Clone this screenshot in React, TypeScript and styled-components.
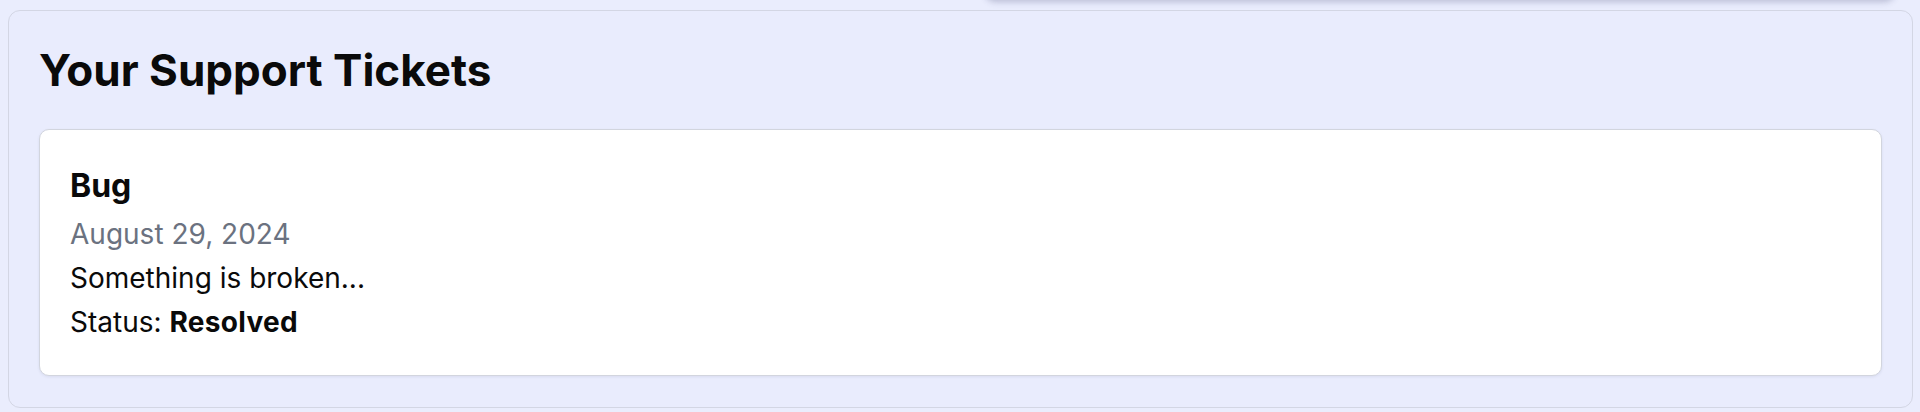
import React from 'react';
import styled, { createGlobalStyle } from 'styled-components';

const GlobalStyle = createGlobalStyle`
  html, body {
    margin: 0;
    padding: 0;
    background: #eaedfd;
    font-family: Inter, "Noto Sans", "Liberation Sans", sans-serif;
    color: #0a0a0a;
  }
  #root {
    min-height: 412px;
  }
`

const Page = styled.div`
  position: relative;
  padding: 10px 7px 7px 8px;
  overflow: hidden;
`

// shadow of a floating element that sits just above the visible area
const TopShadow = styled.div`
  position: absolute;
  top: -20px;
  left: 985px;
  width: 910px;
  height: 20px;
  border-radius: 12px;
  box-shadow: 0 2px 6px rgba(60, 64, 110, 0.28);
`

const Panel = styled.section`
  background: #e9ecfd;
  border: 1px solid #d3d6e4;
  border-radius: 12px;
  padding: 33px 30px 31px 30px;
`

const Title = styled.h2`
  margin: 0 0 33px 0;
  font-size: 44px;
  line-height: 52px;
  font-weight: 700;
  letter-spacing: 0px;
`

const TicketList = styled.div`
  display: flex;
  flex-direction: column;
  gap: 16px;
`

const Card = styled.article`
  background: #ffffff;
  border: 1px solid #d2d5de;
  border-radius: 10px;
  box-shadow: 0 1px 3px rgba(30, 40, 80, 0.08);
  padding: 33px 30px 31px 30px;
`

const TicketType = styled.h3`
  margin: 0 0 3px 0;
  font-size: 32px;
  line-height: 46px;
  font-weight: 700;
`

const Line = styled.p<{ $muted?: boolean }>`
  margin: 0;
  font-size: 28px;
  line-height: 44px;
  color: ${(p) => (p.$muted ? '#6b7280' : '#0a0a0a')};
`

const Strong = styled.strong`
  font-weight: 700;
  letter-spacing: 0.3px;
`

const tickets = [
  { type: 'Bug', date: 'August 29, 2024', message: 'Something is broken...', status: 'Resolved' },
]

const App = () => {
  return (
    <Page>
      <GlobalStyle />
      <TopShadow />
      <Panel>
        <Title>Your Support Tickets</Title>
        <TicketList>
          {tickets.map((t) => (
            <Card key={t.type + t.date}>
              <TicketType>{t.type}</TicketType>
              <Line $muted>{t.date}</Line>
              <Line>{t.message}</Line>
              <Line>
                Status: <Strong>{t.status}</Strong>
              </Line>
            </Card>
          ))}
        </TicketList>
      </Panel>
    </Page>
  )
}

export default App;
